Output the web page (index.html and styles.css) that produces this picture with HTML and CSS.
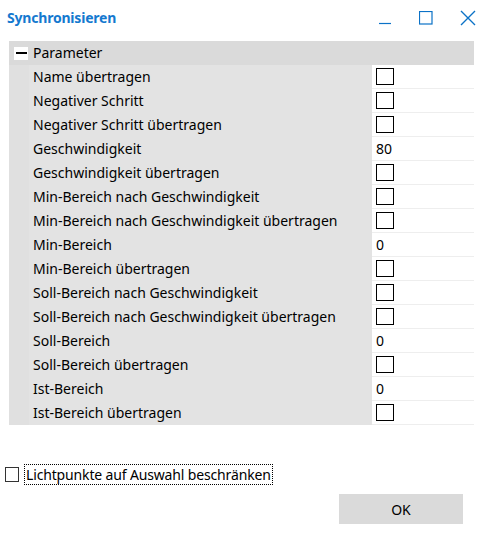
FILE: index.html
```html
<!DOCTYPE html>
<html>
<head>
<meta charset="utf-8">
<link rel="stylesheet" href="styles.css">
</head>
<body>
<div class="window">
  <div class="titlebar">
    <div class="title">Synchronisieren</div>
    <div class="controls">
      <svg class="ctl min" width="14" height="14" viewBox="0 0 14 14"><line x1="1" y1="12.5" x2="13" y2="12.5" stroke="#0b72c7" stroke-width="1.2"/></svg>
      <svg class="ctl max" width="14" height="14" viewBox="0 0 14 14"><rect x="0.5" y="0.5" width="12.5" height="12.5" fill="none" stroke="#0b72c7" stroke-width="1.2"/></svg>
      <svg class="ctl close" width="16" height="16" viewBox="0 0 16 16"><path d="M1 1 L15 15 M15 1 L1 15" stroke="#0b72c7" stroke-width="1.4" fill="none"/></svg>
    </div>
  </div>

  <div class="grid">
    <div class="header">
      <span class="toggle"><span class="bar"></span></span>
      <span class="htext">Parameter</span>
    </div>
    <div class="row"><div class="gutter"></div><div class="label">Name übertragen</div><div class="value"><span class="cb"></span></div></div>
    <div class="row"><div class="gutter"></div><div class="label">Negativer Schritt</div><div class="value"><span class="cb"></span></div></div>
    <div class="row"><div class="gutter"></div><div class="label">Negativer Schritt übertragen</div><div class="value"><span class="cb"></span></div></div>
    <div class="row"><div class="gutter"></div><div class="label">Geschwindigkeit</div><div class="value"><span class="num">80</span></div></div>
    <div class="row"><div class="gutter"></div><div class="label">Geschwindigkeit übertragen</div><div class="value"><span class="cb"></span></div></div>
    <div class="row"><div class="gutter"></div><div class="label">Min-Bereich nach Geschwindigkeit</div><div class="value"><span class="cb"></span></div></div>
    <div class="row"><div class="gutter"></div><div class="label">Min-Bereich nach Geschwindigkeit übertragen</div><div class="value"><span class="cb"></span></div></div>
    <div class="row"><div class="gutter"></div><div class="label">Min-Bereich</div><div class="value"><span class="num">0</span></div></div>
    <div class="row"><div class="gutter"></div><div class="label">Min-Bereich übertragen</div><div class="value"><span class="cb"></span></div></div>
    <div class="row"><div class="gutter"></div><div class="label">Soll-Bereich nach Geschwindigkeit</div><div class="value"><span class="cb"></span></div></div>
    <div class="row"><div class="gutter"></div><div class="label">Soll-Bereich nach Geschwindigkeit übertragen</div><div class="value"><span class="cb"></span></div></div>
    <div class="row"><div class="gutter"></div><div class="label">Soll-Bereich</div><div class="value"><span class="num">0</span></div></div>
    <div class="row"><div class="gutter"></div><div class="label">Soll-Bereich übertragen</div><div class="value"><span class="cb"></span></div></div>
    <div class="row"><div class="gutter"></div><div class="label">Ist-Bereich</div><div class="value"><span class="num">0</span></div></div>
    <div class="row"><div class="gutter"></div><div class="label">Ist-Bereich übertragen</div><div class="value"><span class="cb"></span></div></div>
  </div>

  <div class="restrict">
    <span class="cb small"></span>
    <span class="focus">Lichtpunkte auf Auswahl beschränken</span>
  </div>

  <div class="actions">
    <div class="ok">OK</div>
  </div>
</div>
</body>
</html>
```

FILE: styles.css
```css
html, body {
  margin: 0;
  padding: 0;
  background: #ffffff;
}
body {
  font-family: "Noto Sans", "Open Sans", sans-serif;
  font-size: 14px;
  color: #000;
}
.window {
  width: 478px;
  height: 537px;
  background: #fff;
}
.titlebar {
  height: 41px;
  display: flex;
  align-items: flex-start;
  justify-content: space-between;
}
.title {
  margin-left: 7px;
  margin-top: 8px;
  font-weight: bold;
  font-size: 14px;
  letter-spacing: -0.2px;
  color: #1479cf;
  line-height: 20px;
}
.controls {
  display: flex;
  align-items: flex-start;
  margin-top: 10px;
}
.ctl { display: block; }
.min { margin-top: 1px; }
.max { margin-left: 27px; margin-top: 1px; }
.close { margin-left: 27px; margin-right: 2px; }

.grid {
  margin-left: 9px;
  width: 465px;
}
.header {
  height: 24px;
  background: #dadada;
  display: flex;
  align-items: center;
}
.toggle {
  width: 14px;
  height: 13px;
  background: #fff;
  margin-left: 5px;
  display: flex;
  align-items: center;
  justify-content: center;
}
.bar {
  width: 11px;
  height: 2px;
  background: #000;
}
.htext {
  margin-left: 5px;
  line-height: 24px;
}
.row {
  display: flex;
  height: 24px;
}
.gutter {
  width: 20px;
  background: #e0e0e0;
}
.label {
  width: 339px;
  padding-left: 4px;
  background: #e3e3e3;
  line-height: 24px;
  white-space: nowrap;
}
.value {
  width: 102px;
  background: #fff;
  border-bottom: 1px solid #eeeeee;
  box-sizing: border-box;
  display: flex;
  align-items: center;
  padding-left: 4px;
}
.cb {
  display: block;
  width: 18px;
  height: 17px;
  border: 1px solid #000;
  box-sizing: border-box;
  background: #fff;
}
.num {
  line-height: 24px;
}
.restrict {
  margin-top: 39px;
  margin-left: 5px;
  display: flex;
  align-items: center;
  height: 21px;
}
.cb.small {
  width: 14px;
  height: 15px;
  border-color: #333;
}
.focus {
  margin-left: 5px;
  border: 1px dotted #000;
  height: 21px;
  box-sizing: border-box;
  line-height: 19px;
  padding: 0 1px;
  letter-spacing: -0.15px;
  white-space: nowrap;
}
.actions {
  display: flex;
  justify-content: flex-end;
  margin-top: 9px;
  padding-right: 15px;
}
.ok {
  width: 124px;
  height: 30px;
  background: #dadada;
  display: flex;
  align-items: center;
  justify-content: center;
}
```
